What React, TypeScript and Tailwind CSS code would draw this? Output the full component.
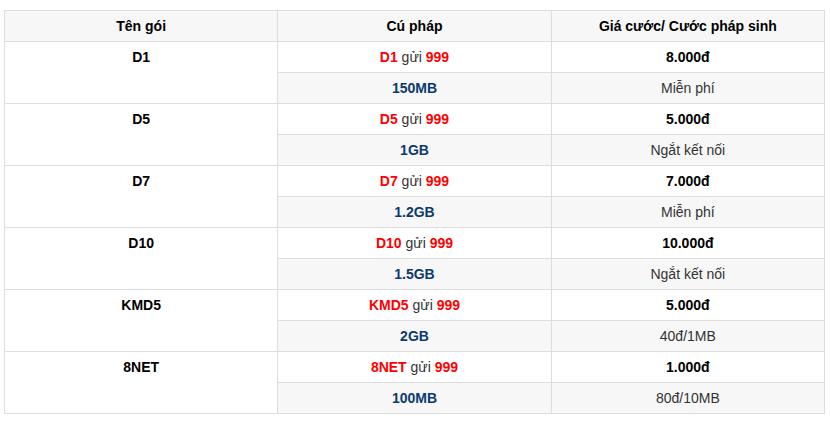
import React from "react";

const rows = [
  { name: "D1", data: "150MB", price: "8.000đ", extra: "Miễn phí" },
  { name: "D5", data: "1GB", price: "5.000đ", extra: "Ngắt kết nối" },
  { name: "D7", data: "1.2GB", price: "7.000đ", extra: "Miễn phí" },
  { name: "D10", data: "1.5GB", price: "10.000đ", extra: "Ngắt kết nối" },
  { name: "KMD5", data: "2GB", price: "5.000đ", extra: "40đ/1MB" },
  { name: "8NET", data: "100MB", price: "1.000đ", extra: "80đ/10MB" },
];

export default function App() {
  return (
    <div className="w-[830px] h-[424px] bg-white pt-[10px] pl-[4px]" style={{ fontFamily: '"Liberation Sans", Arial, sans-serif' }}>
      <table className="w-[821px] border-collapse table-fixed text-[14px] text-[#333]">
        <thead>
          <tr className="bg-[#f7f7f7]">
            <th className="border border-[#dddddd] leading-[30px] p-0 font-bold text-black">Tên gói</th>
            <th className="border border-[#dddddd] leading-[30px] p-0 font-bold text-black">Cú pháp</th>
            <th className="border border-[#dddddd] leading-[30px] p-0 font-bold text-black">Giá cước/ Cước pháp sinh</th>
          </tr>
        </thead>
        <tbody>
          {rows.map((r) => (
            <React.Fragment key={r.name}>
              <tr className="bg-white">
                <td rowSpan={2} className="border border-[#dddddd] leading-[30px] p-0 text-center align-top font-bold text-black">
                  {r.name}
                </td>
                <td className="border border-[#dddddd] leading-[30px] p-0 text-center">
                  <span className="font-bold text-[#ff0000]">{r.name}</span> gửi{" "}
                  <span className="font-bold text-[#ff0000]">999</span>
                </td>
                <td className="border border-[#dddddd] leading-[30px] p-0 text-center font-bold text-black">{r.price}</td>
              </tr>
              <tr className="bg-[#f7f7f7]">
                <td className="border border-[#dddddd] leading-[30px] p-0 text-center font-bold text-[#0b3a6e]">{r.data}</td>
                <td className="border border-[#dddddd] leading-[30px] p-0 text-center">{r.extra}</td>
              </tr>
            </React.Fragment>
          ))}
        </tbody>
      </table>
    </div>
  );
}
